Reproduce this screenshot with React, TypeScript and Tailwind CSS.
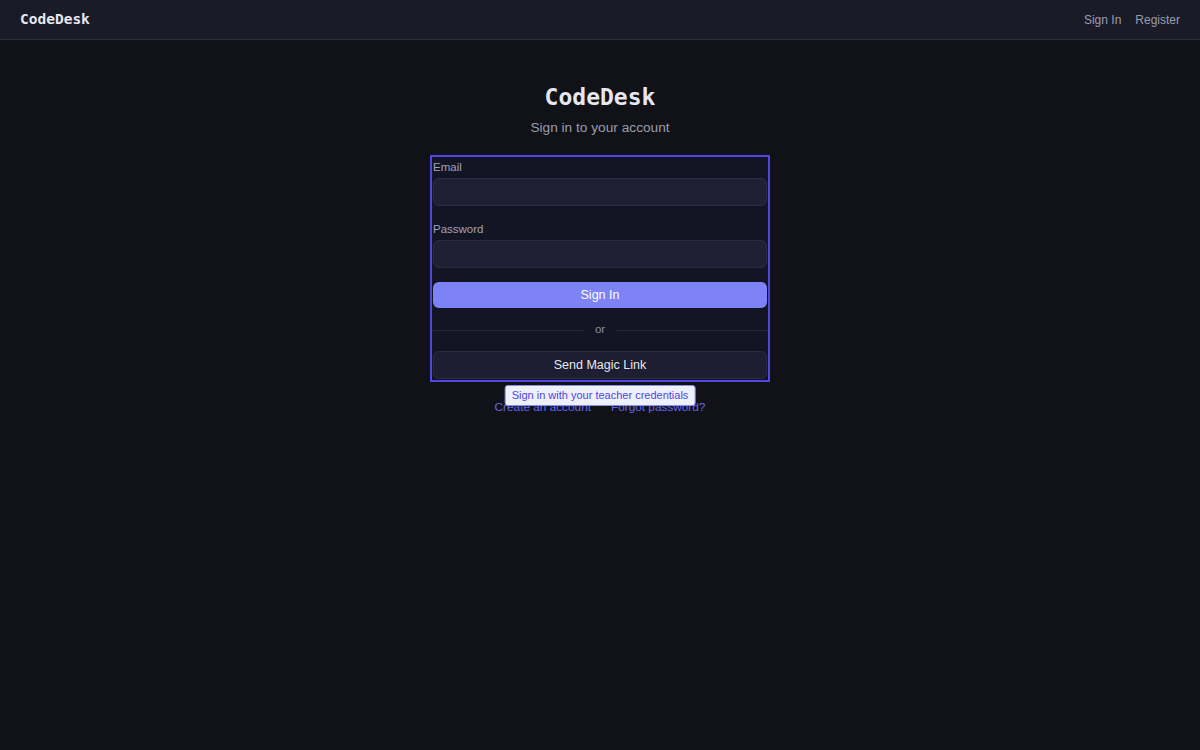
import React from "react";

const sans = { fontFamily: "'Liberation Sans', Arial, sans-serif" };
const mono = { fontFamily: "'DejaVu Sans Mono', 'Liberation Mono', monospace" };

const Field = ({ label, type }: { label: string; type: string }) => (
  <div className="flex flex-col">
    <label className="mt-[1px] h-4 text-[11.5px] leading-4 text-[#a0a2ba]">{label}</label>
    <input
      type={type}
      className="mt-[3px] h-[28px] w-full rounded-md border border-[#2a2c42] bg-[#1f2034] px-2 text-sm text-white outline-none"
    />
  </div>
);

export default function App() {
  return (
    <div className="min-h-[750px] bg-[#111217] text-white" style={sans}>
      <nav className="flex h-10 items-center justify-between border-b border-[#2a2c3c] bg-[#1a1b27] px-5">
        <span className="text-[14.5px] font-bold text-[#e6e7f0]" style={mono}>
          CodeDesk
        </span>
        <ul className="flex items-center gap-[14px] pt-[1px] text-[12px] text-[#9a9cb0]">
          <li>Sign In</li>
          <li>Register</li>
        </ul>
      </nav>

      <main className="flex flex-col items-center pt-[41px]">
        <h1 className="text-[23px] leading-8 font-bold text-[#e6e7f0]" style={mono}>
          CodeDesk
        </h1>
        <p className="mt-[5px] text-[13.7px] leading-5 text-[#9a9cb0]">Sign in to your account</p>

        <form className="mt-[17px] flex w-[340px] flex-col border-2 border-[#4f46e5] bg-[#141524] p-[1px]">
          <Field label="Email" type="email" />
          <div className="mt-[14px]">
            <Field label="Password" type="password" />
          </div>
          <button
            type="button"
            className="mt-[14px] h-[26px] rounded-md bg-[#7d83f6] text-[12.5px] text-white"
          >
            Sign In
          </button>
          <div className="mt-[14px] flex h-4 items-center gap-3">
            <div className="h-px flex-1 bg-[#25273a]" />
            <span className="text-[11.5px] text-[#8a8ca3]">or</span>
            <div className="h-px flex-1 bg-[#25273a]" />
          </div>
          <button
            type="button"
            className="mt-[13px] h-[28px] rounded-md border border-[#2a2c42] bg-[#1d1e31] text-[12.5px] text-[#e6e7f0]"
          >
            Send Magic Link
          </button>
        </form>

        <div className="relative mt-[16px] flex gap-5 text-[11.8px] leading-[18px] text-[#6366f1]">
          <a>Create an account</a>
          <a>Forgot password?</a>
          <div className="absolute left-1/2 top-[-13px] -translate-x-1/2 whitespace-nowrap rounded-[3px] border border-[#8a8fe8] bg-[#eef0fb] px-[6px] py-[1px] text-[11px] leading-[17px] text-[#4f46e5]">
            Sign in with your teacher credentials
          </div>
        </div>
      </main>
    </div>
  );
}
